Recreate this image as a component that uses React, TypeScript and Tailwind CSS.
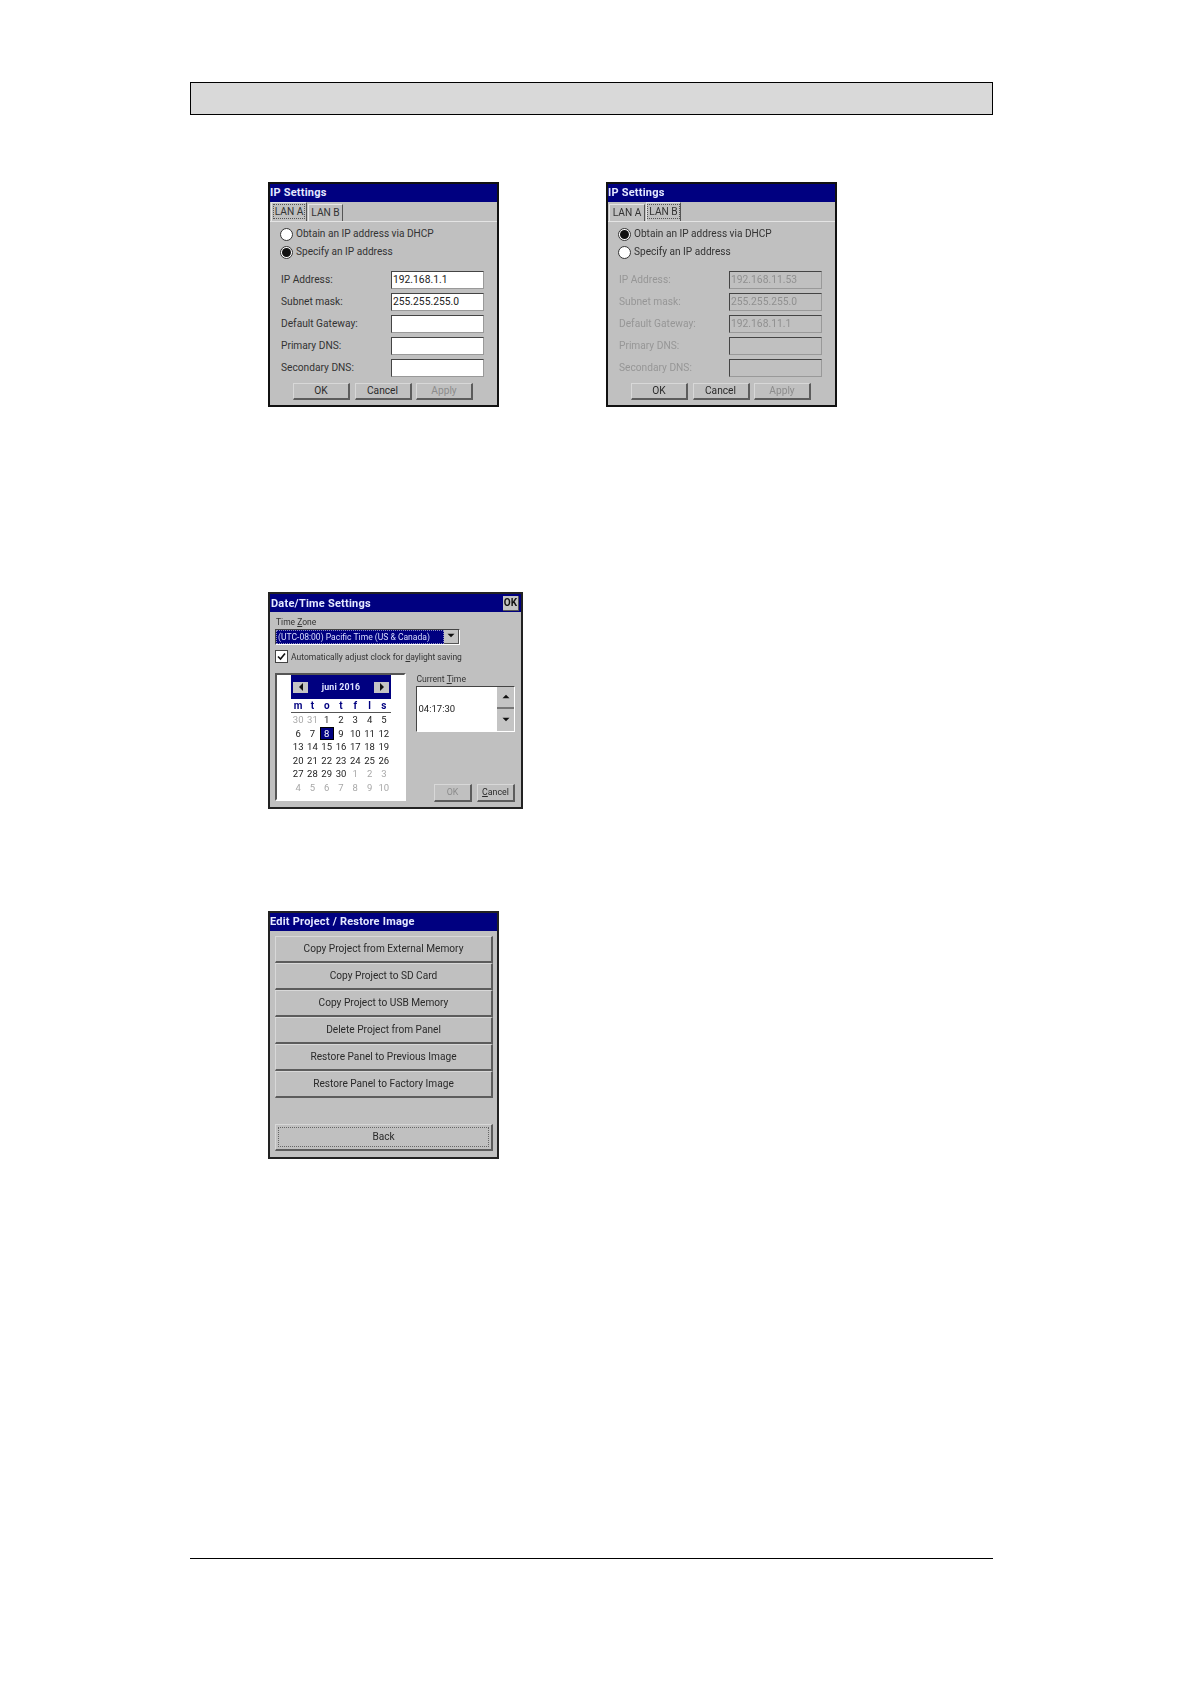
import React from 'react';

const FONT = "font-['Roboto','Liberation_Sans',sans-serif]";

const TitleBar = ({ title, children }: { title: string; children?: React.ReactNode }) => (
  <div className="h-[18px] bg-[#000080] flex items-center justify-between pr-[2px] shrink-0">
    <span className={`text-[11px] font-bold text-[#e4e8ff] tracking-[0.22px] leading-none whitespace-nowrap ${children ? 'pl-[1px]' : '-mt-[1px]'}`}>{title}</span>
    {children}
  </div>
);

const Button = ({ label, disabled, className }: { label: React.ReactNode; disabled?: boolean; className: string }) => (
  <div
    className={`flex items-center justify-center border border-[#d8d8d8] border-r-2 border-b-2 border-r-[#5c5c5c] border-b-[#5c5c5c] whitespace-nowrap ${
      disabled ? 'text-[#8c8c8c]' : 'text-[#2a2a2a]'
    } ${className}`}
  >
    {label}
  </div>
);

const Radio = ({ checked, label }: { checked?: boolean; label: string }) => (
  <div className="flex items-center gap-[3px] h-[18px]">
    <div className="w-[13px] h-[13px] rounded-full bg-white border border-[#333333] flex items-center justify-center">
      {checked && <div className="w-[9px] h-[9px] rounded-full bg-[#111111]" />}
    </div>
    <span className="text-[10.1px] text-[#333333] leading-none whitespace-nowrap mt-[1px]">{label}</span>
  </div>
);

const fields = ['IP Address:', 'Subnet mask:', 'Default Gateway:', 'Primary DNS:', 'Secondary DNS:'];

const IpDialog = ({ active, values, disabled }: { active: 'A' | 'B'; values: string[]; disabled?: boolean }) => (
  <div className="w-[231px] h-[225px] border-2 border-[#111111] bg-[#c0c0c0] flex flex-col overflow-hidden">
    <TitleBar title="IP Settings" />
    <div className="h-[20px] border-b border-[#e4e4e4] flex items-end pl-[1px] gap-[1px] shrink-0">
      {(['A', 'B'] as const).map((t) => (
        <div
          key={t}
          className={`flex items-center justify-center text-[10.2px] text-[#333333] border-l border-t border-[#e4e4e4] border-r border-r-[#555555] whitespace-nowrap ${
            t === 'A' ? 'w-[36px]' : 'w-[35px]'
          } ${t === active ? 'h-[19px] pb-[2px]' : 'h-[17px]'}`}
        >
          <span className={t === active ? 'border border-dotted border-[#555555] px-[1px] leading-[13px]' : ''}>LAN {t}</span>
        </div>
      ))}
    </div>
    <div className="flex flex-col pl-[10px] pr-[13px] pt-[3px]">
      <Radio checked={!disabled ? false : true} label="Obtain an IP address via DHCP" />
      <Radio checked={!disabled} label="Specify an IP address" />
      <div className="flex flex-col gap-[4px] mt-[10px]">
        {fields.map((f, i) => (
          <div key={f} className="flex items-center justify-between h-[18px] pl-[1px]">
            <span className={`text-[10.2px] ${disabled ? 'text-[#969696]' : 'text-[#333333]'}`}>{f}</span>
            <div
              className={`w-[93px] h-[18px] border border-[#444444] border-b-[#999999] border-r-[#999999] flex items-center pl-[1px] text-[10.3px] ${
                disabled ? 'bg-[#c0c0c0] text-[#909090]' : 'bg-white text-[#222222]'
              }`}
            >
              {values[i]}
            </div>
          </div>
        ))}
      </div>
      <div className="flex gap-[4.5px] mt-[6px] ml-[13px]">
        <Button label="OK" className="w-[57px] h-[17px] text-[10.2px]" />
        <Button label="Cancel" className="w-[57px] h-[17px] text-[10.2px]" />
        <Button label="Apply" disabled className="w-[57px] h-[17px] text-[10.2px]" />
      </div>
    </div>
  </div>
);

const Triangle = ({ dir }: { dir: 'up' | 'down' | 'left' | 'right' }) => {
  const pts = { up: '0,6 10,6 5,1', down: '0,1 10,1 5,6', left: '7,1 7,9 3,5', right: '3,1 3,9 7,5' }[dir];
  return (
    <svg width="10" height="10" viewBox="0 0 10 10" className={dir === 'up' || dir === 'down' ? 'h-[7px]' : ''}>
      <polygon points={pts} fill="#111111" />
    </svg>
  );
};

const days = [
  '30', '31', '1', '2', '3', '4', '5',
  '6', '7', '8', '9', '10', '11', '12',
  '13', '14', '15', '16', '17', '18', '19',
  '20', '21', '22', '23', '24', '25', '26',
  '27', '28', '29', '30', '1', '2', '3',
  '4', '5', '6', '7', '8', '9', '10',
];

const Calendar = () => (
  <div className="w-[132px] h-[128px] bg-white border-2 border-[#555555] border-r-white border-b-white pl-[14px] flex flex-col">
    <div className="w-[100px] h-[24px] bg-[#000080] flex items-center justify-between px-[2px] shrink-0">
      <div className="w-[15px] h-[11px] bg-[#c4c4c4] flex items-center justify-center"><Triangle dir="left" /></div>
      <span className="text-[8.8px] font-bold text-[#dfe4ff] leading-none tracking-[0.2px]">juni 2016</span>
      <div className="w-[15px] h-[11px] bg-[#c4c4c4] flex items-center justify-center"><Triangle dir="right" /></div>
    </div>
    <div className="w-[100px] grid grid-cols-7 border-b border-[#555555] h-[14px] shrink-0">
      {['m', 't', 'o', 't', 'f', 'l', 's'].map((d, i) => (
        <span key={i} className="text-center text-[10px] font-bold text-[#000080] leading-[14px]">{d}</span>
      ))}
    </div>
    <div className="w-[100px] grid grid-cols-7 auto-rows-[13.5px]">
      {days.map((d, i) => {
        const muted = i < 2 || i > 31;
        const selected = i === 9;
        return (
          <span
            key={i}
            className={`flex items-center justify-center text-[9.5px] leading-none ${
              selected ? 'bg-[#000080] text-white border border-black' : muted ? 'text-[#a8a8a8]' : 'text-[#222222]'
            }`}
          >
            {d}
          </span>
        );
      })}
    </div>
  </div>
);

const DateDialog = () => (
  <div className="w-[255px] h-[217px] border-2 border-[#222222] bg-[#c0c0c0] flex flex-col overflow-hidden">
    <TitleBar title="Date/Time Settings">
      <div className="w-[16px] h-[15px] bg-[#c4c4c4] border-r border-b border-[#555555] flex items-center justify-center text-[10px] font-bold text-[#111111] leading-none">
        OK
      </div>
    </TitleBar>
    <div className="flex flex-col pl-[5px] pr-[6px]">
      <span className="text-[8.5px] text-[#333333] mt-[3px] leading-[14px] pl-[1px]">Time <u>Z</u>one</span>
      <div className="w-[185px] h-[16px] border border-[#444444] border-r-white border-b-white bg-white flex">
        <div className="w-[168px] bg-[#000080] text-[#d8dcff] text-[8.55px] leading-[12px] pl-[1px] whitespace-nowrap border border-dotted border-[#8c8cc0]">
          (UTC-08:00) Pacific Time (US &amp; Canada)
        </div>
        <div className="flex-1 bg-[#c4c4c4] border-r border-b border-[#555555] flex items-center justify-center">
          <Triangle dir="down" />
        </div>
      </div>
      <div className="flex items-center gap-[3px] mt-[5px] h-[13px]">
        <div className="w-[13px] h-[13px] bg-white border border-[#444444] flex items-center justify-center">
          <svg width="9" height="9" viewBox="0 0 9 9"><path d="M1 4.5 L3.5 7 L8 1.5" fill="none" stroke="#111111" strokeWidth="1.6" /></svg>
        </div>
        <span className="text-[8.5px] text-[#333333] leading-none whitespace-nowrap mt-[1px]">
          Automatically adjust clock for <u>d</u>aylight saving
        </span>
      </div>
      <div className="flex mt-[10px] gap-[10px]">
        <Calendar />
        <div className="flex flex-col w-[99px] -mt-[1px]">
          <span className="text-[8.6px] text-[#333333] leading-[14px]">Current <u>T</u>ime</span>
          <div className="h-[46px] border border-[#444444] border-r-white border-b-white bg-white flex items-center">
            <span className="flex-1 text-[9.5px] text-[#222222] pl-[1px]">04:17:30</span>
            <div className="w-[17px] h-full flex flex-col">
              <div className="h-[22px] bg-[#c4c4c4] border-b-2 border-[#777777] flex items-center justify-center"><Triangle dir="up" /></div>
              <div className="flex-1 bg-[#c4c4c4] flex items-center justify-center"><Triangle dir="down" /></div>
            </div>
          </div>
          <div className="flex justify-end gap-[5px] mt-[52px]">
            <Button label="OK" disabled className="w-[38px] h-[18px] text-[8.8px]" />
            <Button label={<span><u>C</u>ancel</span>} className="w-[38px] h-[18px] text-[8.8px]" />
          </div>
        </div>
      </div>
    </div>
  </div>
);

const actions = [
  'Copy Project from External Memory',
  'Copy Project to SD Card',
  'Copy Project to USB Memory',
  'Delete Project from Panel',
  'Restore Panel to Previous Image',
  'Restore Panel to Factory Image',
];

const ProjectDialog = () => (
  <div className="w-[231px] h-[248px] border-2 border-[#222222] bg-[#c0c0c0] flex flex-col overflow-hidden">
    <TitleBar title="Edit Project / Restore Image" />
    <div className="flex flex-col pl-[5px] pt-[5px]">
      {actions.map((a) => (
        <Button key={a} label={a} className="w-[218px] h-[27px] text-[10.15px]" />
      ))}
      <div className="w-[218px] h-[27px] mt-[26px] border border-[#d8d8d8] border-r-2 border-b-2 border-r-[#5c5c5c] border-b-[#5c5c5c] p-[2px]">
        <div className="w-full h-full border border-dotted border-[#666666] flex items-center justify-center text-[10.15px] text-[#2a2a2a]">
          Back
        </div>
      </div>
    </div>
  </div>
);

export default function App() {
  return (
    <div className={`w-[1190px] h-[1684px] bg-white flex flex-col ${FONT}`}>
      <div className="ml-[190px] mt-[82px] w-[803px] h-[33px] border border-black bg-[#d9d9d9]" />
      <div className="ml-[268px] mt-[67px] flex gap-[107px] blur-[0.5px]">
        <IpDialog active="A" values={['192.168.1.1', '255.255.255.0', '', '', '']} />
        <IpDialog active="B" disabled values={['192.168.11.53', '255.255.255.0', '192.168.11.1', '', '']} />
      </div>
      <div className="ml-[268px] mt-[185px] blur-[0.5px]">
        <DateDialog />
      </div>
      <div className="ml-[268px] mt-[102px] blur-[0.5px]">
        <ProjectDialog />
      </div>
      <div className="ml-[190px] mt-[399px] w-[803px] h-[1px] bg-black" />
    </div>
  );
}
